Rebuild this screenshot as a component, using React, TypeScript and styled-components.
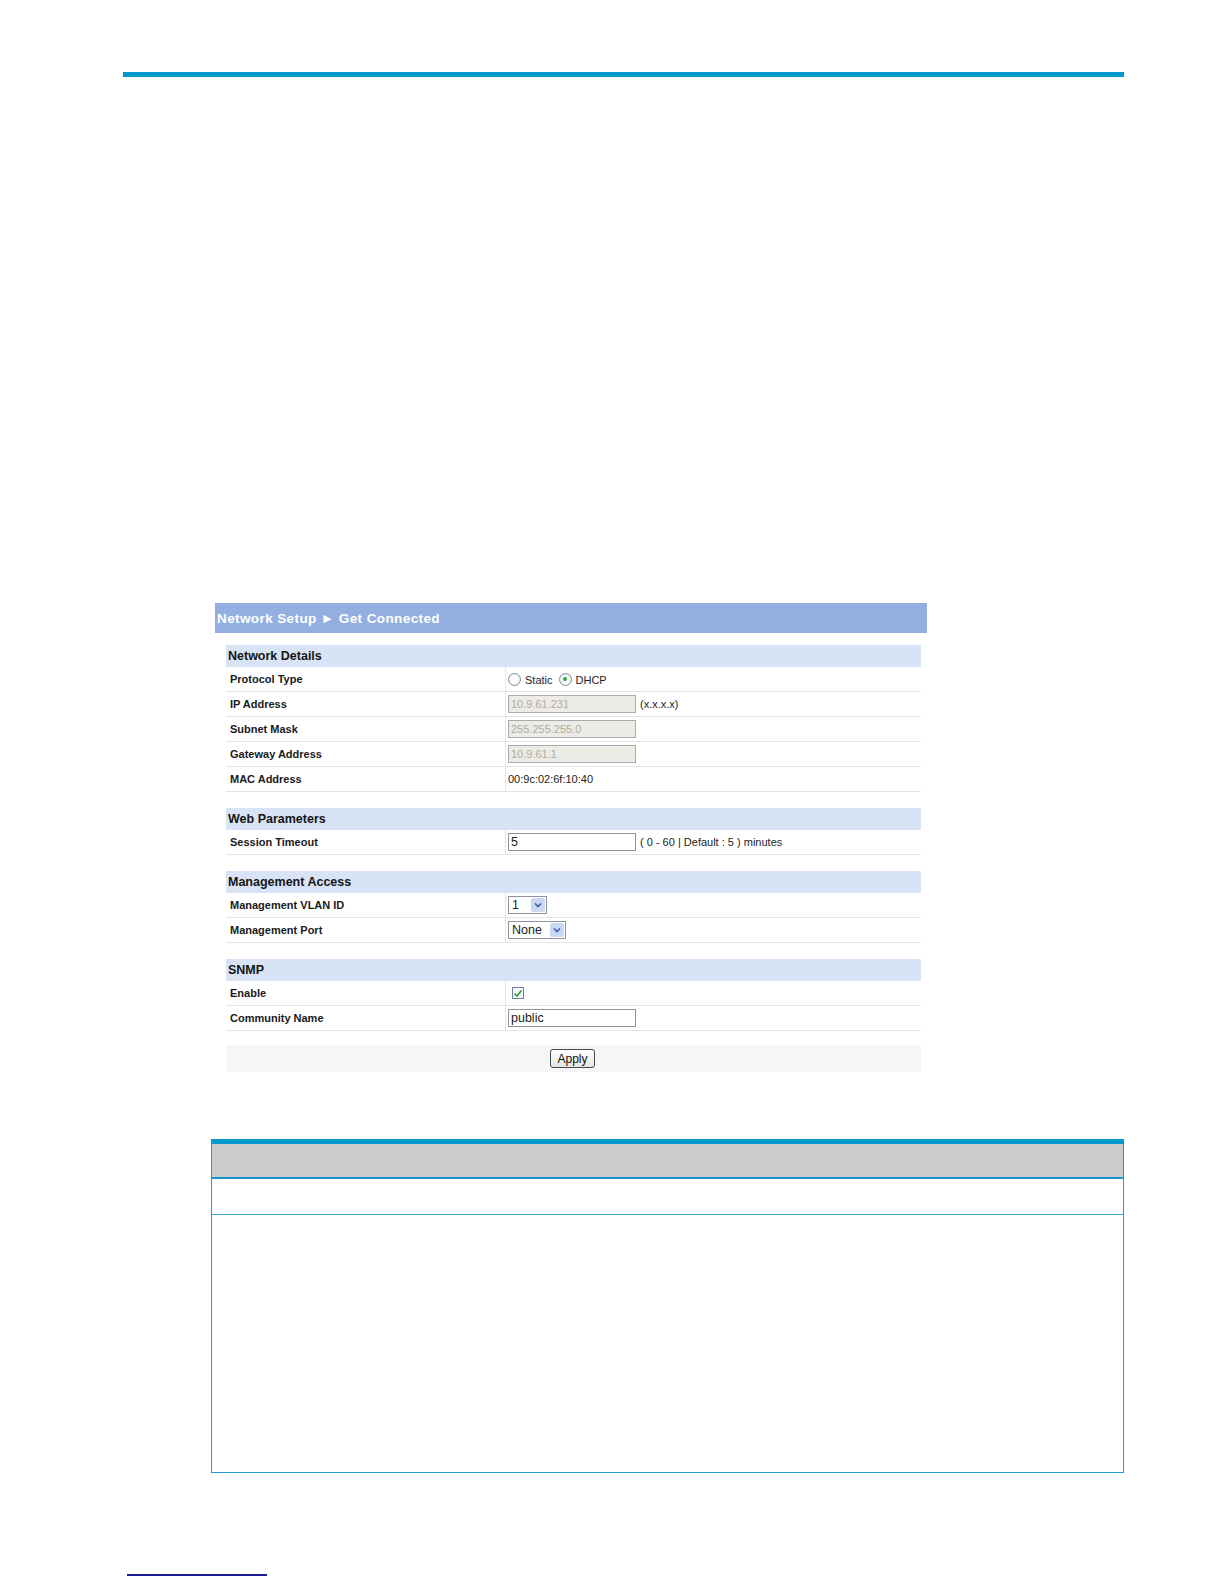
import React from "react";
import styled, { createGlobalStyle } from "styled-components";

const GlobalStyle = createGlobalStyle`
  html, body {
    margin: 0;
    padding: 0;
    background: #ffffff;
    width: 1224px;
    height: 1584px;
    overflow: hidden;
  }
  body {
    font-family: "Liberation Sans", Arial, sans-serif;
    color: #111111;
  }
  #root {
    width: 1224px;
    height: 1584px;
    overflow: hidden;
  }
`;

type Row = {
  label: string;
  value: React.ReactNode;
};

type Section = {
  title: string;
  rows: Row[];
};

const Page = styled.div`
  width: 1224px;
  height: 1584px;
  overflow: hidden;
  padding-top: 72px;
  box-sizing: border-box;
  display: flex;
  flex-direction: column;
`;

const TopRule = styled.div`
  margin-left: 123px;
  width: 1001px;
  height: 5px;
  flex-shrink: 0;
  background: #0598cf;
`;

const Panel = styled.div`
  margin-top: 526px;
  margin-left: 215px;
  width: 712px;
  display: flex;
  flex-direction: column;
  flex-shrink: 0;
`;

const PanelTitle = styled.div`
  height: 30px;
  background: #93afe1;
  color: #ffffff;
  font-weight: bold;
  font-size: 13.5px;
  letter-spacing: 0.4px;
  display: flex;
  align-items: center;
  padding-left: 2px;
  margin-bottom: 12px;
`;

const Body = styled.div`
  margin-left: 11px;
  width: 695px;
  display: flex;
  flex-direction: column;
  gap: 16px;
`;

const Table = styled.div`
  display: flex;
  flex-direction: column;
`;

const SectionHead = styled.div`
  height: 22px;
  background: #d8e4f5;
  font-weight: bold;
  font-size: 12.5px;
  display: flex;
  align-items: center;
  padding-left: 2px;
  color: #151515;
`;

const RowLine = styled.div`
  display: grid;
  grid-template-columns: 279px 1fr;
  height: 24px;
  border-bottom: 1px solid #e4e4e4;
  background: #ffffff;
`;

const Label = styled.div`
  display: flex;
  align-items: center;
  padding-left: 4px;
  font-weight: bold;
  font-size: 11px;
  color: #1a1a1a;
`;

const Value = styled.div`
  display: flex;
  align-items: center;
  gap: 4px;
  padding-left: 2px;
  border-left: 1px solid #e4e4e4;
  font-size: 11px;
  color: #222222;
`;

const TextBox = styled.div<{ $disabled?: boolean; $w?: number }>`
  width: ${({ $w }) => $w ?? 128}px;
  height: 18px;
  box-sizing: border-box;
  border: 1px solid ${({ $disabled }) => ($disabled ? "#a7abaf" : "#8f9498")};
  background: ${({ $disabled }) => ($disabled ? "#ecebe6" : "#ffffff")};
  color: ${({ $disabled }) => ($disabled ? "#b0ad9f" : "#222222")};
  font-size: ${({ $disabled }) => ($disabled ? "11px" : "12.5px")};
  display: flex;
  align-items: center;
  padding-left: 2px;
`;

const Radio = styled.span<{ $on?: boolean }>`
  width: 11px;
  height: 11px;
  border-radius: 50%;
  border: 1px solid #7f8b96;
  background: radial-gradient(circle, #ffffff 40%, #dfe3e8 100%);
  display: inline-flex;
  align-items: center;
  justify-content: center;
  &::after {
    content: "";
    width: 4px;
    height: 4px;
    border-radius: 50%;
    background: ${({ $on }) => ($on ? "#2fa63a" : "transparent")};
  }
`;

const RadioText = styled.span`
  font-size: 11px;
  margin-right: 2px;
  margin-top: 2px;
`;

const Select = styled.div<{ $w: number }>`
  width: ${({ $w }) => $w}px;
  height: 18px;
  box-sizing: border-box;
  border: 1px solid #8f9498;
  background: #ffffff;
  display: flex;
  align-items: center;
  justify-content: space-between;
  padding-left: 3px;
  padding-right: 1px;
  font-size: 12.5px;
  color: #222222;
`;

const SelectArrow = styled.span`
  width: 14px;
  height: 14px;
  background: #c9d8f3;
  border-radius: 2px;
  display: inline-flex;
  align-items: center;
  justify-content: center;
`;

const Check = styled.span`
  width: 12px;
  height: 12px;
  box-sizing: border-box;
  border: 1px solid #6f8294;
  background: #f4f6f8;
  display: inline-flex;
  align-items: center;
  justify-content: center;
  margin-left: 4px;
`;

const ApplyBar = styled.div`
  margin-top: -2px;
  height: 27px;
  background: #f6f6f6;
  display: flex;
  align-items: center;
  justify-content: center;
`;

const ApplyButton = styled.button`
  width: 45px;
  height: 19px;
  padding: 0;
  border: 1px solid #444a50;
  border-radius: 3px;
  background: linear-gradient(#ffffff, #e6e6e0);
  font-family: "Liberation Sans", Arial, sans-serif;
  font-size: 12px;
  color: #111111;
  margin-right: 2px;
`;

const DocTable = styled.div`
  margin-top: 67px;
  margin-left: 211px;
  width: 913px;
  height: 334px;
  flex-shrink: 0;
  box-sizing: border-box;
  border: 1px solid #1d9bd3;
  border-top: 5px solid #0598cf;
  display: flex;
  flex-direction: column;
`;

const DocHead = styled.div`
  height: 33px;
  background: #cbcbcb;
  border-bottom: 2px solid #1896d2;
`;

const DocRow = styled.div<{ $h: number; $line?: boolean }>`
  height: ${({ $h }) => $h}px;
  border-bottom: ${({ $line }) => ($line ? "1px solid #3aa7d8" : "none")};
`;

const FooterLink = styled.div`
  margin-top: 101px;
  margin-left: 127px;
  width: 140px;
  height: 2px;
  flex-shrink: 0;
  background: #1c1c8f;
`;

const ArrowIcon = () => (
  <svg width="8" height="6" viewBox="0 0 8 6">
    <path d="M1 1.5 L4 4.5 L7 1.5" fill="none" stroke="#3a5fa8" strokeWidth="1.6" />
  </svg>
);

const CheckIcon = () => (
  <svg width="10" height="9" viewBox="0 0 10 9">
    <path d="M1.5 4.5 L4 7 L8.5 1.5" fill="none" stroke="#2e9a3a" strokeWidth="1.6" />
  </svg>
);

const sections: Section[] = [
  {
    title: "Network Details",
    rows: [
      {
        label: "Protocol Type",
        value: (
          <>
            <Radio />
            <RadioText>Static</RadioText>
            <Radio $on />
            <RadioText>DHCP</RadioText>
          </>
        ),
      },
      {
        label: "IP Address",
        value: (
          <>
            <TextBox $disabled>10.9.61.231</TextBox>
            <span>(x.x.x.x)</span>
          </>
        ),
      },
      { label: "Subnet Mask", value: <TextBox $disabled>255.255.255.0</TextBox> },
      { label: "Gateway Address", value: <TextBox $disabled>10.9.61.1</TextBox> },
      { label: "MAC Address", value: <span>00:9c:02:6f:10:40</span> },
    ],
  },
  {
    title: "Web Parameters",
    rows: [
      {
        label: "Session Timeout",
        value: (
          <>
            <TextBox>5</TextBox>
            <span>( 0 - 60 | Default : 5 ) minutes</span>
          </>
        ),
      },
    ],
  },
  {
    title: "Management Access",
    rows: [
      {
        label: "Management VLAN ID",
        value: (
          <Select $w={39}>
            1
            <SelectArrow>
              <ArrowIcon />
            </SelectArrow>
          </Select>
        ),
      },
      {
        label: "Management Port",
        value: (
          <Select $w={58}>
            None
            <SelectArrow>
              <ArrowIcon />
            </SelectArrow>
          </Select>
        ),
      },
    ],
  },
  {
    title: "SNMP",
    rows: [
      {
        label: "Enable",
        value: (
          <Check>
            <CheckIcon />
          </Check>
        ),
      },
      { label: "Community Name", value: <TextBox>public</TextBox> },
    ],
  },
];

const App: React.FC = () => {
  return (
    <>
      <GlobalStyle />
      <Page>
        <TopRule />
        <Panel>
          <PanelTitle>Network Setup ► Get Connected</PanelTitle>
          <Body>
            {sections.map((section) => (
              <Table key={section.title}>
                <SectionHead>{section.title}</SectionHead>
                {section.rows.map((row) => (
                  <RowLine key={row.label}>
                    <Label>{row.label}</Label>
                    <Value>{row.value}</Value>
                  </RowLine>
                ))}
              </Table>
            ))}
            <ApplyBar>
              <ApplyButton type="button">Apply</ApplyButton>
            </ApplyBar>
          </Body>
        </Panel>
        <DocTable>
          <DocHead />
          <DocRow $h={35} $line />
          <DocRow $h={255} />
        </DocTable>
        <FooterLink />
      </Page>
    </>
  );
};

export default App;
